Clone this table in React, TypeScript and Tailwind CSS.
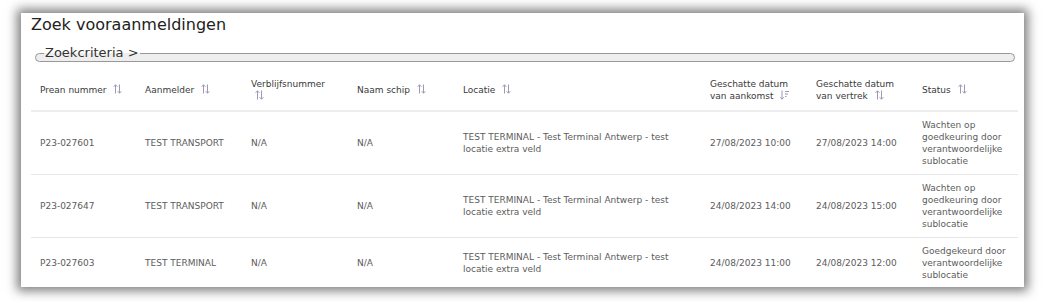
import React from "react";

type Row = {
  nr: string;
  aanmelder: string;
  verblijf: string;
  schip: string;
  locatie: string;
  aankomst: string;
  vertrek: string;
  status: string;
};

const rows: Row[] = [
  {
    nr: "P23-027601",
    aanmelder: "TEST TRANSPORT",
    verblijf: "N/A",
    schip: "N/A",
    locatie: "TEST TERMINAL - Test Terminal Antwerp - test locatie extra veld",
    aankomst: "27/08/2023 10:00",
    vertrek: "27/08/2023 14:00",
    status: "Wachten op goedkeuring door verantwoordelijke sublocatie",
  },
  {
    nr: "P23-027647",
    aanmelder: "TEST TRANSPORT",
    verblijf: "N/A",
    schip: "N/A",
    locatie: "TEST TERMINAL - Test Terminal Antwerp - test locatie extra veld",
    aankomst: "24/08/2023 14:00",
    vertrek: "24/08/2023 15:00",
    status: "Wachten op goedkeuring door verantwoordelijke sublocatie",
  },
  {
    nr: "P23-027603",
    aanmelder: "TEST TERMINAL",
    verblijf: "N/A",
    schip: "N/A",
    locatie: "TEST TERMINAL - Test Terminal Antwerp - test locatie extra veld",
    aankomst: "24/08/2023 11:00",
    vertrek: "24/08/2023 12:00",
    status: "Goedgekeurd door verantwoordelijke sublocatie",
  },
];

function SortIcon() {
  return (
    <svg
      width="9"
      height="10"
      viewBox="0 0 9 10"
      fill="none"
      stroke="#9f99b3"
      strokeWidth="1"
      className="inline-block ml-[4px] align-[-1px]"
    >
      <path d="M2.5 9.5V0.8M0.6 2.8L2.5 0.8L4.4 2.8M6.5 0.5v8.7M4.6 7.2l1.9 2 1.9-2" />
    </svg>
  );
}

function SortedIcon() {
  return (
    <svg
      width="9"
      height="10"
      viewBox="0 0 9 10"
      fill="none"
      stroke="#9f99b3"
      strokeWidth="1"
      className="inline-block ml-[4px] align-[-1px]"
    >
      <path d="M2 0.5v8.7M0.2 7.2l1.8 2 1.8-2M5 1.5h4M5 4h3M5 6.5h1.5" />
    </svg>
  );
}

const headers: { label: string; sorted?: boolean; w: string }[] = [
  { label: "Prean nummer", w: "w-[105px]" },
  { label: "Aanmelder", w: "w-[106px]" },
  { label: "Verblijfsnummer", w: "w-[106px]" },
  { label: "Naam schip", w: "w-[106px]" },
  { label: "Locatie", w: "w-[247px]" },
  { label: "Geschatte datum van aankomst", sorted: true, w: "w-[106px]" },
  { label: "Geschatte datum van vertrek", w: "w-[106px]" },
  { label: "Status", w: "w-[105px]" },
];

export default function App() {
  return (
    <div className="w-[1045px] h-[302px] bg-white pt-[13px] pl-[21px] font-['DejaVu_Sans',sans-serif]">
      <div className="w-[1003px] h-[274px] bg-white overflow-hidden shadow-[0_0_10px_4px_rgba(0,0,0,0.5)] pl-[10px] pr-[6px]">
        <h1 className="mt-[2px] text-[16px] leading-[20px] text-[#222]">Zoek vooraanmeldingen</h1>

        <fieldset className="ml-[4px] mr-[3px] mt-[10px] border border-[#999] rounded-[5px] bg-[#eeeeee] px-[8px] pb-0 min-w-0">
          <legend className="px-[1px] text-[13px] leading-[16px] text-[#333]">Zoekcriteria &gt;</legend>
        </fieldset>

        <table className="mt-[8px] w-[987px] table-fixed border-collapse text-[9px] leading-[12px]">
          <thead>
            <tr className="border-b-2 border-[#eeeeee]">
              {headers.map((h) => (
                <th
                  key={h.label}
                  className={`${h.w} px-[9px] py-[8px] h-[40px] text-left font-normal align-middle text-[#3a3a3a]`}
                >
                  {h.label} {h.sorted ? <SortedIcon /> : <SortIcon />}
                </th>
              ))}
            </tr>
          </thead>
          <tbody className="text-[#5c5c5c]">
            {rows.map((r) => (
              <tr key={r.nr} className="border-b border-[#e6e6e6]">
                <td className="px-[9px] py-[7px] align-middle">{r.nr}</td>
                <td className="px-[9px] py-[7px] align-middle">{r.aanmelder}</td>
                <td className="px-[9px] py-[7px] align-middle">{r.verblijf}</td>
                <td className="px-[9px] py-[7px] align-middle">{r.schip}</td>
                <td className="px-[9px] py-[7px] align-middle">{r.locatie}</td>
                <td className="px-[9px] py-[7px] align-middle">{r.aankomst}</td>
                <td className="px-[9px] py-[7px] align-middle">{r.vertrek}</td>
                <td className="px-[9px] py-[7px] align-middle">{r.status}</td>
              </tr>
            ))}
          </tbody>
        </table>
      </div>
    </div>
  );
}
